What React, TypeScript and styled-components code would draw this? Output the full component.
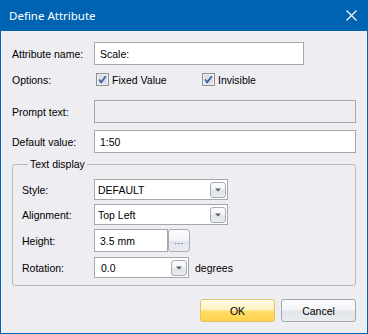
import React from "react";
import styled, { createGlobalStyle } from "styled-components";

const GlobalStyle = createGlobalStyle`
  html, body { margin: 0; padding: 0; background: #eeedf2; }
  * { box-sizing: border-box; }
`;

const Window = styled.div`
  width: 368px;
  height: 334px;
  display: flex;
  flex-direction: column;
  background: #eeedf2;
  border: 1px solid #0063b1;
  border-top: none;
  font-family: "Liberation Sans", Arial, sans-serif;
  font-size: 10.5px;
  color: #000;
`;

const TitleBar = styled.div`
  height: 31px;
  flex: none;
  background: #0063b1;
  padding: 0 10px 0 8px;
  display: flex;
  align-items: center;
  justify-content: space-between;
  color: #fff;
  font-family: "Noto Sans", "Open Sans", sans-serif;
  font-size: 11.5px;
`;

const CloseIcon = () => (
  <svg width="11" height="11" viewBox="0 0 11 11">
    <path d="M0.5 0.5 L10.5 10.5 M10.5 0.5 L0.5 10.5" stroke="#fff" strokeWidth="1.1" />
  </svg>
);

const Content = styled.div`
  flex: 1;
  display: flex;
  flex-direction: column;
  padding: 11px;
`;

const Row = styled.div<{ $mt: number; $h?: number }>`
  display: flex;
  align-items: center;
  margin-top: ${(p) => p.$mt}px;
  height: ${(p) => p.$h ?? 23}px;
  flex: none;
`;

const Label = styled.span<{ $w: number }>`
  width: ${(p) => p.$w}px;
  flex: none;
  white-space: nowrap;
`;

const TextBox = styled.input<{ $w: number }>`
  width: ${(p) => p.$w}px;
  height: 100%;
  border: 1px solid #a7a7ab;
  background: #fff;
  padding: 0 0 0 5px;
  margin: 0;
  font-family: "Liberation Sans", Arial, sans-serif;
  font-size: 10.5px;
  color: #000;
  outline: none;
  border-radius: 0;
  &:disabled {
    background: #eeedf2;
  }
`;

const Combo = styled.div<{ $w: number }>`
  width: ${(p) => p.$w}px;
  height: 100%;
  border: 1px solid #a7a7ab;
  background: #fff;
  display: flex;
  align-items: center;
  padding: 0 1px 0 3px;
`;

const ComboText = styled.span`
  flex: 1;
`;

const DropButton = styled.span`
  width: 16px;
  height: 16px;
  flex: none;
  border: 1px solid #a9adb3;
  border-radius: 3px;
  background: linear-gradient(#fbfcfd 0%, #f1f3f6 50%, #dfe4ea 51%, #e8ecf1 100%);
  display: flex;
  align-items: center;
  justify-content: center;
`;

const Arrow = () => (
  <svg width="6" height="4" viewBox="0 0 6 4">
    <path d="M0 0.5 H6 L3 3.5 Z" fill="#5a5d63" />
  </svg>
);

const EllipsisButton = styled.span`
  width: 22px;
  height: 23px;
  flex: none;
  border: 1px solid #a9adb3;
  border-radius: 3px;
  background: linear-gradient(#fbfcfd 0%, #f1f3f6 50%, #dfe4ea 51%, #e8ecf1 100%);
  display: flex;
  align-items: center;
  justify-content: center;
  color: #2e1f7a;
  font-size: 9px;
  line-height: 1;
  letter-spacing: 0.5px;
  padding-top: 2px;
`;

const CheckItem = styled.label<{ $w?: number }>`
  display: flex;
  align-items: center;
  gap: 3px;
  width: ${(p) => (p.$w ? `${p.$w}px` : "auto")};
  flex: none;
`;

const CheckBox = () => (
  <svg width="13" height="13" viewBox="0 0 13 13">
    <rect x="0.5" y="0.5" width="12" height="12" fill="#f2f2f2" stroke="#8d8f93" />
    <rect x="2" y="2" width="9" height="9" fill="#d9e0ea" />
    <path d="M3.2 6.4 L5.2 9.2 L9.8 3.2" stroke="#3d5a9a" strokeWidth="1.7" fill="none" />
  </svg>
);

const Group = styled.fieldset`
  margin: 5px 0 0 0;
  padding: 8px 0 7px 9px;
  border: 1px solid #b9b9c1;
  border-radius: 3px;
  min-inline-size: 0;
`;

const Legend = styled.legend`
  margin-left: 6px;
  padding: 0 2px;
  line-height: 13px;
`;

const Suffix = styled.span`
  margin-left: 6px;
`;

const ButtonBar = styled.div`
  margin-top: auto;
  display: flex;
  justify-content: flex-end;
  gap: 6px;
`;

const DialogButton = styled.button<{ $primary?: boolean }>`
  width: 75px;
  height: 23px;
  margin: 0;
  padding: 0;
  border-radius: 3px;
  font-family: "Liberation Sans", Arial, sans-serif;
  font-size: 10.5px;
  color: #000;
  border: 1px solid ${(p) => (p.$primary ? "#e6c16a" : "#a4a8ae")};
  background: ${(p) =>
    p.$primary
      ? "linear-gradient(#fffbe8 0%, #fff1c0 45%, #ffdc6a 55%, #ffd24a 100%)"
      : "linear-gradient(#fdfdfd 0%, #f3f4f6 45%, #e1e4e9 55%, #e9ecef 100%)"};
`;

export default function App() {
  return (
    <>
      <GlobalStyle />
      <Window>
        <TitleBar>
          <span>Define Attribute</span>
          <CloseIcon />
        </TitleBar>
        <Content>
          <Row $mt={0}>
            <Label $w={82}>Attribute name:</Label>
            <TextBox $w={210} readOnly defaultValue="Scale:" />
          </Row>
          <Row $mt={3}>
            <Label $w={84}>Options:</Label>
            <CheckItem $w={106}>
              <CheckBox />
              Fixed Value
            </CheckItem>
            <CheckItem>
              <CheckBox />
              Invisible
            </CheckItem>
          </Row>
          <Row $mt={9}>
            <Label $w={82}>Prompt text:</Label>
            <TextBox $w={266} disabled defaultValue="" />
          </Row>
          <Row $mt={7}>
            <Label $w={82}>Default value:</Label>
            <TextBox $w={266} readOnly defaultValue="1:50" />
          </Row>
          <Group>
            <Legend>Text display</Legend>
            <Row $mt={0} $h={21}>
              <Label $w={72}>Style:</Label>
              <Combo $w={134}>
                <ComboText>DEFAULT</ComboText>
                <DropButton>
                  <Arrow />
                </DropButton>
              </Combo>
            </Row>
            <Row $mt={4} $h={21}>
              <Label $w={72}>Alignment:</Label>
              <Combo $w={134}>
                <ComboText>Top Left</ComboText>
                <DropButton>
                  <Arrow />
                </DropButton>
              </Combo>
            </Row>
            <Row $mt={4} $h={23}>
              <Label $w={72}>Height:</Label>
              <TextBox $w={74} readOnly defaultValue="3.5 mm" />
              <EllipsisButton>...</EllipsisButton>
            </Row>
            <Row $mt={5} $h={21}>
              <Label $w={72}>Rotation:</Label>
              <Combo $w={95}>
                <ComboText>&nbsp;0.0</ComboText>
                <DropButton>
                  <Arrow />
                </DropButton>
              </Combo>
              <Suffix>degrees</Suffix>
            </Row>
          </Group>
          <ButtonBar>
            <DialogButton $primary>OK</DialogButton>
            <DialogButton>Cancel</DialogButton>
          </ButtonBar>
        </Content>
      </Window>
    </>
  );
}
